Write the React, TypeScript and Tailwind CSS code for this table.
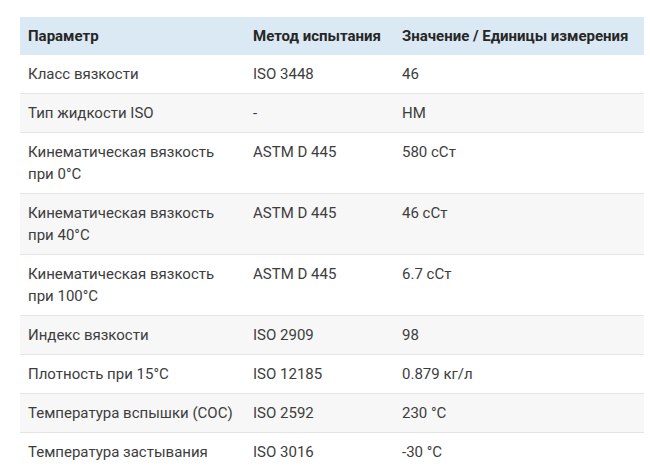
import React from 'react';

type Row = { name: string[]; method: string; value: string };

const rows: Row[] = [
  { name: ['Класс вязкости'], method: 'ISO 3448', value: '46' },
  { name: ['Тип жидкости ISO'], method: '-', value: 'HM' },
  { name: ['Кинематическая вязкость', 'при 0°C'], method: 'ASTM D 445', value: '580 сСт' },
  { name: ['Кинематическая вязкость', 'при 40°C'], method: 'ASTM D 445', value: '46 сСт' },
  { name: ['Кинематическая вязкость', 'при 100°C'], method: 'ASTM D 445', value: '6.7 сСт' },
  { name: ['Индекс вязкости'], method: 'ISO 2909', value: '98' },
  { name: ['Плотность при 15°C'], method: 'ISO 12185', value: '0.879 кг/л' },
  { name: ['Температура вспышки (COC)'], method: 'ISO 2592', value: '230 °C' },
  { name: ['Температура застывания'], method: 'ISO 3016', value: '-30 °C' },
];

const App: React.FC = () => {
  return (
    <div className="min-h-screen bg-white pt-[17px] pl-[20px] pr-[6px] font-['Roboto',sans-serif] text-[15px] leading-[22px] text-[#3d3d3d]">
      <table className="w-full table-fixed border-collapse">
        <colgroup>
          <col className="w-[225px]" />
          <col className="w-[149px]" />
          <col />
        </colgroup>
        <thead>
          <tr className="bg-[#dbe9f4] text-left text-[#262626]">
            <th className="px-2 py-2 font-bold">Параметр</th>
            <th className="px-2 py-2 font-bold">Метод испытания</th>
            <th className="px-2 py-2 font-bold whitespace-nowrap">Значение / Единицы измерения</th>
          </tr>
        </thead>
        <tbody>
          {rows.map((r, i) => (
            <tr key={i} className={(i % 2 === 1 ? 'bg-[#f7f7f7]' : 'bg-white') + ' border-b border-[#e4e4e4] align-top'}>
              <td className="px-2 py-2 whitespace-nowrap">
                {r.name.map((n, j) => (
                  <div key={j}>{n}</div>
                ))}
              </td>
              <td className="px-2 py-2">{r.method}</td>
              <td className="px-2 py-2">{r.value}</td>
            </tr>
          ))}
        </tbody>
      </table>
    </div>
  );
};

export default App;
